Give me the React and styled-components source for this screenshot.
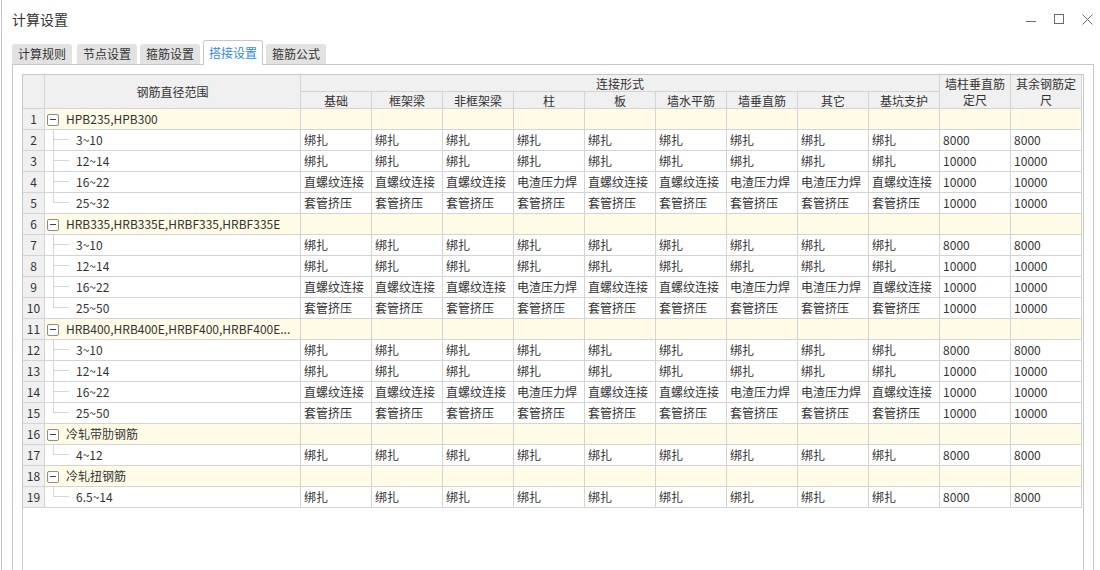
import React from "react";
import styled, { createGlobalStyle, css } from "styled-components";

const Global = createGlobalStyle`
  html, body { margin: 0; padding: 0; background: #fff; }
  body {
    font-family: "Noto Sans CJK SC", "Microsoft YaHei", sans-serif;
    font-size: 12px;
    color: #333;
  }
`;

const Window = styled.div`
  height: 570px;
  overflow: hidden;
  margin-left: 1px;
  border-left: 1px solid #c6c6c6;
  display: flex;
  flex-direction: column;
  box-sizing: border-box;
  background: #fff;
`;

const TitleBar = styled.div`
  height: 38px;
  flex-shrink: 0;
  display: flex;
  align-items: center;
  justify-content: space-between;
  padding: 0 7px 0 10px;
`;

const Title = styled.div`
  font-size: 14px;
  line-height: 20px;
  color: #333;
`;

const Controls = styled.div`
  display: flex;
  align-items: center;
  gap: 17px;
`;

const CtrlIcon = styled.svg`
  width: 11px;
  height: 11px;
  display: block;
  stroke: #6a6a6a;
  fill: none;
  stroke-width: 1;
`;

const Tabs = styled.div`
  height: 26px;
  flex-shrink: 0;
  display: flex;
  align-items: flex-end;
  gap: 3px;
  padding-left: 10px;
`;

const Tab = styled.div`
  box-sizing: border-box;
  height: 20px;
  line-height: 20px;
  padding: 0 6px;
  background: #e2e2e2;
  border-radius: 3px 3px 0 0;
  color: #333;
  white-space: nowrap;
  &:first-child { margin-right: 2px; }
  ${(p) =>
    p.$active &&
    css`
      position: relative;
      z-index: 1;
      height: 25px;
      line-height: 23px;
      padding: 0 5px;
      background: #fff;
      border: 1px solid #c8c8c8;
      border-bottom: none;
      margin-bottom: -1px;
      color: #2f8be6;
    `}
`;

const Panel = styled.div`
  margin-left: 10px;
  width: 1082px;
  flex: 1;
  box-sizing: border-box;
  border: 1px solid #c8c8c8;
  border-bottom: none;
  padding: 9px 9px 0;
  background: #fff;
`;

const Frame = styled.div`
  height: 560px;
  border: 1px solid #c8c8c8;
  box-sizing: border-box;
  background: #fff;
`;

const Table = styled.table`
  border-collapse: separate;
  border-spacing: 0;
  table-layout: fixed;
  width: 1059px;
  font-size: 12px;
  color: #333;
`;

const HeadRow = styled.tr`
  height: 17px;
`;

const BodyRow = styled.tr`
  height: 21px;
`;

const cellBase = css`
  box-sizing: border-box;
  border-right: 1px solid #d4d4d4;
  border-bottom: 1px solid #d4d4d4;
  padding: 0 3px;
  line-height: 16px;
  white-space: nowrap;
  overflow: hidden;
`;

const Th = styled.th`
  ${cellBase};
  background: #f0f0f0;
  font-weight: normal;
  text-align: center;
  padding: 0;
  line-height: ${(p) => (p.$twoLine ? "16px" : "15px")};
`;

const NumCell = styled.td`
  ${cellBase};
  background: #f0f0f0;
  text-align: center;
  padding: 0;
`;

const Td = styled.td`
  ${cellBase};
  background: ${(p) => (p.$group ? "#fffbe6" : "#fff")};
`;

const RangeCell = styled.td`
  ${cellBase};
  position: relative;
  background: #fff;
  padding-left: 31px;
  &::before {
    content: "";
    position: absolute;
    left: 8px;
    top: 0;
    width: 1px;
    height: ${(p) => (p.$last ? "10px" : "100%")};
    background: #d6d6d6;
  }
  &::after {
    content: "";
    position: absolute;
    left: 8px;
    top: 9px;
    width: 16px;
    height: 1px;
    background: #d6d6d6;
  }
`;

const GroupCell = styled.td`
  ${cellBase};
  background: #fffbe6;
  padding: 0 3px 0 2px;
`;

const GroupLabel = styled.div`
  display: flex;
  align-items: center;
  gap: 7px;
  min-width: 0;
`;

const Toggle = styled.span`
  flex-shrink: 0;
  box-sizing: border-box;
  width: 12px;
  height: 12px;
  margin-top: 1px;
  border: 1px solid #8c8c8c;
  border-radius: 2px;
  background: #fff;
  display: flex;
  align-items: center;
  justify-content: center;
  &::before {
    content: "";
    width: 6px;
    height: 1px;
    background: #444;
  }
`;

const GroupText = styled.span`
  min-width: 0;
  overflow: hidden;
  text-overflow: ellipsis;
  white-space: nowrap;
`;

const connCols = ["基础", "框架梁", "非框架梁", "柱", "板", "墙水平筋", "墙垂直筋", "其它", "基坑支护"];

const B = "绑扎";
const Z = "直螺纹连接";
const D = "电渣压力焊";
const T = "套管挤压";

const bind8 = [B, B, B, B, B, B, B, B, B, "8000", "8000"];
const bind10 = [B, B, B, B, B, B, B, B, B, "10000", "10000"];
const thread = [Z, Z, Z, D, Z, Z, D, D, Z, "10000", "10000"];
const sleeve = [T, T, T, T, T, T, T, T, T, "10000", "10000"];

const groups = [
  {
    name: "HPB235,HPB300",
    children: [
      ["3~10", bind8],
      ["12~14", bind10],
      ["16~22", thread],
      ["25~32", sleeve],
    ],
  },
  {
    name: "HRB335,HRB335E,HRBF335,HRBF335E",
    children: [
      ["3~10", bind8],
      ["12~14", bind10],
      ["16~22", thread],
      ["25~50", sleeve],
    ],
  },
  {
    name: "HRB400,HRB400E,HRBF400,HRBF400E...",
    children: [
      ["3~10", bind8],
      ["12~14", bind10],
      ["16~22", thread],
      ["25~50", sleeve],
    ],
  },
  { name: "冷轧带肋钢筋", children: [["4~12", bind8]] },
  { name: "冷轧扭钢筋", children: [["6.5~14", bind8]] },
];

function buildRows() {
  const rows = [];
  let n = 1;
  groups.forEach((g, gi) => {
    rows.push(
      <BodyRow key={`g${gi}`}>
        <NumCell>{n++}</NumCell>
        <GroupCell>
          <GroupLabel>
            <Toggle />
            <GroupText>{g.name}</GroupText>
          </GroupLabel>
        </GroupCell>
        {Array.from({ length: 11 }).map((_, i) => (
          <Td key={i} $group />
        ))}
      </BodyRow>
    );
    g.children.forEach(([range, vals], ci) => {
      rows.push(
        <BodyRow key={`g${gi}c${ci}`}>
          <NumCell>{n++}</NumCell>
          <RangeCell $last={ci === g.children.length - 1}>{range}</RangeCell>
          {vals.map((v, i) => (
            <Td key={i}>{v}</Td>
          ))}
        </BodyRow>
      );
    });
  });
  return rows;
}

export default function App() {
  return (
    <>
      <Global />
      <Window>
        <TitleBar>
          <Title>计算设置</Title>
          <Controls>
            <CtrlIcon viewBox="0 0 11 11">
              <line x1="0" y1="7.5" x2="10" y2="7.5" />
            </CtrlIcon>
            <CtrlIcon viewBox="0 0 11 11">
              <rect x="0.5" y="0.5" width="9" height="9" />
            </CtrlIcon>
            <CtrlIcon viewBox="0 0 11 11">
              <line x1="0.5" y1="0.5" x2="10.5" y2="10.5" />
              <line x1="10.5" y1="0.5" x2="0.5" y2="10.5" />
            </CtrlIcon>
          </Controls>
        </TitleBar>
        <Tabs>
          <Tab>计算规则</Tab>
          <Tab>节点设置</Tab>
          <Tab>箍筋设置</Tab>
          <Tab $active>搭接设置</Tab>
          <Tab>箍筋公式</Tab>
        </Tabs>
        <Panel>
          <Frame>
            <Table>
              <colgroup>
                <col style={{ width: 22 }} />
                <col style={{ width: 256 }} />
                {Array.from({ length: 11 }).map((_, i) => (
                  <col key={i} style={{ width: 71 }} />
                ))}
              </colgroup>
              <thead>
                <HeadRow>
                  <Th rowSpan={2} />
                  <Th rowSpan={2}>钢筋直径范围</Th>
                  <Th colSpan={9}>连接形式</Th>
                  <Th rowSpan={2} $twoLine>
                    墙柱垂直筋
                    <br />
                    定尺
                  </Th>
                  <Th rowSpan={2} $twoLine>
                    其余钢筋定
                    <br />
                    尺
                  </Th>
                </HeadRow>
                <HeadRow>
                  {connCols.map((c) => (
                    <Th key={c}>{c}</Th>
                  ))}
                </HeadRow>
              </thead>
              <tbody>{buildRows()}</tbody>
            </Table>
          </Frame>
        </Panel>
      </Window>
    </>
  );
}
